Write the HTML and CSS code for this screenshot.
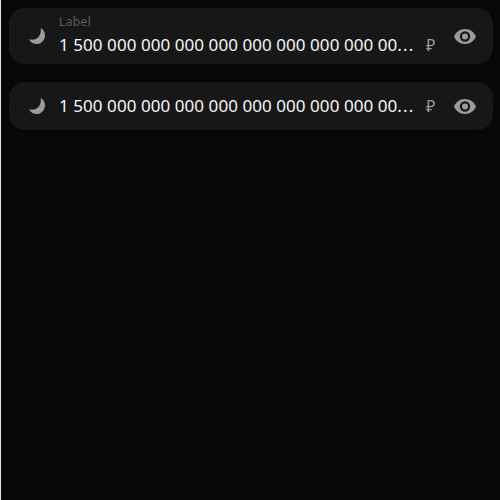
FILE: index.html
```
<!DOCTYPE html>
<html lang="en">
<head>
<meta charset="utf-8">
<title>Amount fields</title>
<link rel="stylesheet" href="styles.css">
</head>
<body>
<main class="stack">
  <div class="field field-labelled">
    <svg class="icon" viewBox="0 0 24 24"><path d="M15.600 3.900C18.400 5.500 20 8 20 11.200C20 16.200 16.200 20 11.700 20C8.300 20 5.400 18.200 4 15.300C11.500 17 17 12 15.600 3.900Z"/></svg>
    <div class="content">
      <div class="label">Label</div>
      <div class="value">1 500 000 000 000 000 000 000 000 000 00<span class="ellipsis">...</span></div>
    </div>
    <span class="currency">₽</span>
    <svg class="icon" viewBox="0 0 24 24"><path fill-rule="evenodd" d="M12 4.500C7 4.500 2.730 7.610 1 12c1.730 4.390 6 7.500 11 7.500s9.270-3.110 11-7.500c-1.730-4.390-6-7.500-11-7.500zM12 17.200a5.200 5.200 0 1 1 0-10.400 5.200 5.200 0 0 1 0 10.400zm0-8.200a3 3 0 1 0 0 6 3 3 0 0 0 0-6z" transform="translate(0 .5)"/></svg>
  </div>
  <div class="field">
    <svg class="icon" viewBox="0 0 24 24"><path d="M15.600 3.900C18.400 5.500 20 8 20 11.200C20 16.200 16.200 20 11.700 20C8.300 20 5.400 18.200 4 15.300C11.500 17 17 12 15.600 3.900Z"/></svg>
    <div class="content">
      <div class="value">1 500 000 000 000 000 000 000 000 000 00<span class="ellipsis">...</span></div>
    </div>
    <span class="currency">₽</span>
    <svg class="icon" viewBox="0 0 24 24"><path fill-rule="evenodd" d="M12 4.500C7 4.500 2.730 7.610 1 12c1.730 4.390 6 7.500 11 7.500s9.270-3.110 11-7.500c-1.730-4.390-6-7.500-11-7.500zM12 17.200a5.200 5.200 0 1 1 0-10.400 5.200 5.200 0 0 1 0 10.400zm0-8.200a3 3 0 1 0 0 6 3 3 0 0 0 0-6z" transform="translate(0 .5)"/></svg>
  </div>
</main>
</body>
</html>
```
FILE: styles.css
```
* { box-sizing: border-box; }
body {
  margin: 0;
  height: 100vh;
  background: #080808;
  border-left: 1px solid #e6e6e6;
  font-family: "Noto Sans", sans-serif;
}
.stack {
  display: flex;
  flex-direction: column;
  gap: 18px;
  padding: 8px 7px 0 8px;
}
.field {
  display: flex;
  align-items: center;
  height: 48px;
  padding: 0 16px;
  border-radius: 16px;
  background: #171717;
}
.field-labelled { height: 56px; }
.icon { flex: none; width: 24px; height: 24px; fill: #9b9b9b; }
.content { width: 356px; margin: 0 10px; white-space: nowrap; }
.label { font-size: 12px; line-height: 16px; letter-spacing: .4px; color: #5c5c5c; }
.value { font-size: 17px; line-height: 24px; letter-spacing: .06px; color: #f5f5f5; }
.field-labelled .label { margin-top: -1px; }
.field-labelled .value { margin-top: 3px; }
.ellipsis { letter-spacing: 1.200px; }
.currency { width: 9px; margin-left: 1px; margin-right: auto; font-size: 16px; line-height: 24px; color: #9b9b9b; }
.field-labelled .currency { margin-top: 18px; }
```
